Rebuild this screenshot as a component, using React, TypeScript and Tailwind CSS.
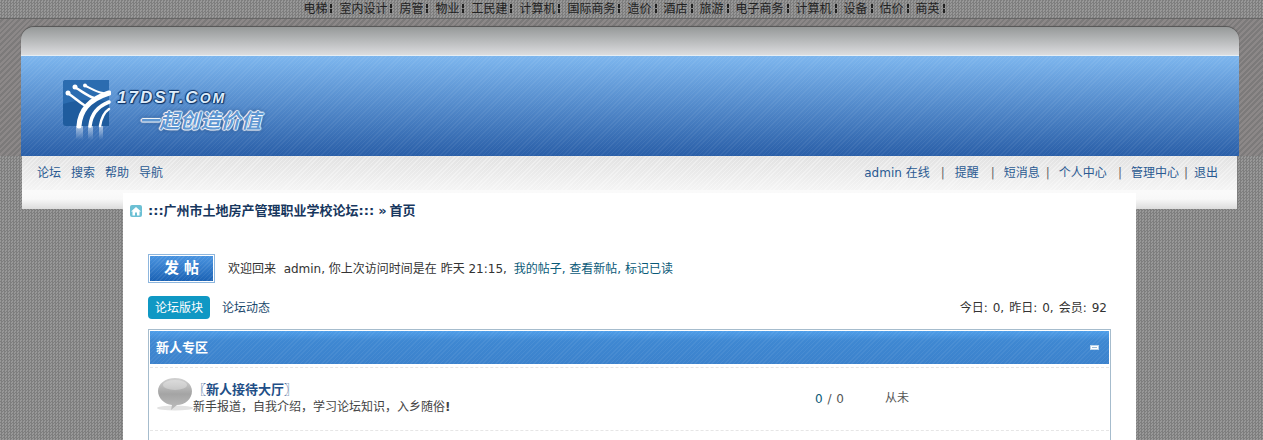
import React from 'react';

const topLinks = ['电梯', '室内设计', '房管', '物业', '工民建', '计算机', '国际商务', '造价', '酒店', '旅游', '电子商务', '计算机', '设备', '估价', '商英'];

const Logo = () => (
  <svg width="48" height="60" viewBox="0 0 48 60" className="shrink-0">
    <defs>
      <linearGradient id="fade" x1="0" y1="0" x2="0" y2="1">
        <stop offset="0" stopColor="#ffffff" stopOpacity="0.55" />
        <stop offset="1" stopColor="#ffffff" stopOpacity="0" />
      </linearGradient>
    </defs>
    <path d="M3 0H46V46H3A3 3 0 0 1 0 43V3A3 3 0 0 1 3 0Z" fill="#1f5c9e" />
    <path d="M3 0H46V22C30 18 14 20 0 24V3A3 3 0 0 1 3 0Z" fill="#2b6cb0" />
    <g fill="none" stroke="#ffffff" strokeLinecap="round">
      <path d="M16 46C17 32 24 20 46 13" strokeWidth="5" />
      <path d="M27 46C28 36 33 27 46 22" strokeWidth="3.5" />
      <path d="M37 46C38 40 40 33 46 29" strokeWidth="2.5" />
      <path d="M6 14C12 18 16 22 21 25" strokeWidth="2.5" />
      <path d="M13 8C20 12 25 16 31 18" strokeWidth="2.5" />
      <path d="M23 6C29 9 34 12 40 13" strokeWidth="2" />
    </g>
    <g fill="#ffffff">
      <circle cx="5" cy="13" r="2.5" />
      <circle cx="12" cy="7" r="2.5" />
      <circle cx="22" cy="5.5" r="2" />
    </g>
    <path d="M13 46H20V60H13ZM25 46H30V60H25ZM36 46H40V60H36Z" fill="url(#fade)" />
  </svg>
);

const Bubble = () => (
  <svg width="36" height="34" viewBox="0 0 36 34" className="shrink-0">
    <defs>
      <linearGradient id="bubble" x1="0" y1="0" x2="0" y2="1">
        <stop offset="0" stopColor="#d2d2d2" />
        <stop offset="0.5" stopColor="#a4a4a4" />
        <stop offset="1" stopColor="#bdbdbd" />
      </linearGradient>
    </defs>
    <ellipse cx="18" cy="30" rx="18" ry="2.5" fill="#e2e2e2" />
    <path d="M18 0C28 0 35 6 35 13C35 21 28 27 20 27L14 32L15 27C7 26 1 20 1 13C1 6 8 0 18 0Z" fill="url(#bubble)" />
    <ellipse cx="18" cy="7" rx="12" ry="5" fill="#ffffff" opacity="0.3" />
  </svg>
);

const App: React.FC = () => {
  return (
    <div className="w-full h-[440px] overflow-hidden text-[12px] leading-none text-[#444] font-['DejaVu_Sans','Noto_Sans_CJK_SC',sans-serif] bg-[repeating-conic-gradient(#7e7e7e_0_25%,#989898_0_50%)] bg-[length:3px_3px]">
      {/* top links */}
      <div className="h-[18px] flex items-center justify-center pr-[8px] text-[#222]">
        {topLinks.map((link, i) => (
          <span key={i} className="flex items-center">
            <span>{link}</span>
            <span className="ml-[3px] mr-[7px] w-[2px] h-[10px] bg-[repeating-linear-gradient(#222_0_4px,transparent_4px_5px)]" />
          </span>
        ))}
      </div>

      {/* header */}
      <div className="h-[138px] pt-[9px] pr-[24px] pl-[21px] bg-[repeating-linear-gradient(135deg,#8c8888_0_2px,#7c7a7a_2px_4px)] shadow-[inset_0_1px_0_#666]">
        <div className="h-[29px] rounded-t-[13px] bg-gradient-to-b from-[#969999] to-[#dcdddf] border-b border-[#e6eef4] shadow-[0_-1px_1px_#555]" />
        <div className="h-[100px] pt-[24px] pl-[42px] flex overflow-hidden bg-[repeating-linear-gradient(135deg,rgba(255,255,255,0.06)_0_1px,transparent_1px_3px),linear-gradient(#7db6ee,#2a5fa8)]">
          <Logo />
          <div className="ml-[6px] pt-[9px] italic font-bold">
            <div className="text-[17px] tracking-[2px] text-[#dcebfa] [text-shadow:0_0_2px_#0e3265,1px_1px_1px_#0e3265,-1px_0_1px_#0e3265,0_-1px_1px_#0e3265] font-['Liberation_Sans',sans-serif]">
              17DST.C<span className="text-[14px]">OM</span>
            </div>
            <div className="mt-[5px] ml-[22px] text-[20px] tracking-[0.4px] text-[#5f97d2] [text-shadow:0_0_1px_#fff,1px_0_1px_#fff,-1px_0_1px_#fff,0_1px_1px_#fff,0_-1px_1px_#fff,0_0_4px_#0e3265]">
              一起创造价值
            </div>
          </div>
        </div>
      </div>

      {/* nav */}
      <div className="mx-[22px] w-[1215px] h-[53px] bg-[linear-gradient(#fafafa_0_36px,#f8f8f8_43px,#dcdcdc_53px)]">
        <div className="h-[34px] pl-[15px] pr-[19px] flex items-center justify-between text-[#2a5a92] bg-[repeating-linear-gradient(135deg,rgba(255,255,255,0.35)_0_1px,transparent_1px_3px),linear-gradient(#e2e2e2,#f4f4f4)]">
          <div className="flex gap-[10px]">
            <span>论坛</span>
            <span>搜索</span>
            <span>帮助</span>
            <span>导航</span>
          </div>
          <div className="flex items-center">
            <span className="mr-[11px]">admin 在线</span>
            <span className="text-[#666] mr-[10px]">|</span>
            <span className="mr-[12px]">提醒</span>
            <span className="text-[#666] mr-[9px]">|</span>
            <span className="mr-[6px]">短消息</span>
            <span className="text-[#666] mr-[9px]">|</span>
            <span className="mr-[11px]">个人中心</span>
            <span className="text-[#666] mr-[9px]">|</span>
            <span className="mr-[5px]">管理中心</span>
            <span className="text-[#666] mr-[6px]">|</span>
            <span>退出</span>
          </div>
        </div>
      </div>

      {/* main content */}
      <div className="relative -mt-[16px] ml-[123px] w-[1013px] h-[260px] bg-white pt-[11px]">
        <div className="flex items-center pl-[7px] h-[13px] font-bold text-[13px] text-[#17375e]">
          <span className="w-[12px] h-[12px] rounded-[2px] bg-[#6cc0d4] flex items-center justify-center mr-[6px]">
            <svg width="10" height="10" viewBox="0 0 10 10">
              <path d="M5 1L10 5.5H8.5V9.5H6V6.5H4V9.5H1.5V5.5H0Z" fill="#ffffff" />
            </svg>
          </span>
          <span>:::广州市土地房产管理职业学校论坛:::</span>
          <span className="ml-[4px]">»</span>
          <span className="ml-[3px]">首页</span>
        </div>

        <div className="mt-[37px] ml-[25px] flex items-center">
          <div className="w-[67px] h-[29px] border border-[#8db6de] p-px">
            <div className="h-full flex items-center justify-center text-white font-bold text-[15px] bg-[repeating-linear-gradient(135deg,rgba(255,255,255,0.08)_0_1px,transparent_1px_3px),linear-gradient(#4a94e0,#1b62b4)]">
              发 帖
            </div>
          </div>
          <div className="ml-[13px] text-[#333]">
            欢迎回来&nbsp; admin, 你上次访问时间是在&nbsp;昨天 21:15, <span className="ml-[3px] text-[#0a5a78]">我的帖子, 查看新帖, 标记已读</span>
          </div>
        </div>

        <div className="mt-[13px] ml-[25px] mr-[29px] flex items-center justify-between">
          <div className="flex items-center">
            <div className="w-[62px] h-[23px] rounded-[4px] bg-[#0f98c4] text-white flex items-center justify-center">论坛版块</div>
            <div className="ml-[12px] text-[#1c4a6e]">论坛动态</div>
          </div>
          <div className="text-[#333] [word-spacing:1.2px]">今日: 0, 昨日: 0, 会员: 92</div>
        </div>

        <div className="mt-[10px] ml-[25px] w-[963px] h-[200px] border border-[#a6bccd] p-px">
          <div className="h-[33px] flex items-center justify-between pl-[6px] pr-[10px] text-white font-bold text-[13px] bg-[repeating-linear-gradient(135deg,rgba(255,255,255,0.06)_0_1px,transparent_1px_3px),linear-gradient(#4f9ee9_0,#3f88d2_30%,#3c82cc)]">
            <span>新人专区</span>
            <span className="w-[9px] h-[5px] bg-white border border-[#bcd4ea] p-px">
              <span className="block h-full bg-[#9cbcd8]" />
            </span>
          </div>
          <div className="mt-[3px] h-[64px] border-y border-dashed border-[#e6e6e6] relative flex">
            <div className="pl-[7px] pt-[10px]">
              <Bubble />
            </div>
            <div className="pt-[14px]">
              <div className="font-bold text-[13px] text-[#1f4f87] font-['Noto_Sans_CJK_SC',sans-serif]">〖新人接待大厅〗</div>
              <div className="mt-[6px] text-[#444]">新手报道，自我介绍，学习论坛知识，入乡随俗<span className="font-bold">!</span></div>
            </div>
            <div className="absolute left-[665px] top-[25px] text-[#555] [word-spacing:1px]">
              <span className="text-[#0a5a78]">0</span> / 0
            </div>
            <div className="absolute left-[735px] top-[24px] text-[#555]">从未</div>
          </div>
        </div>
      </div>
    </div>
  );
};

export default App;
